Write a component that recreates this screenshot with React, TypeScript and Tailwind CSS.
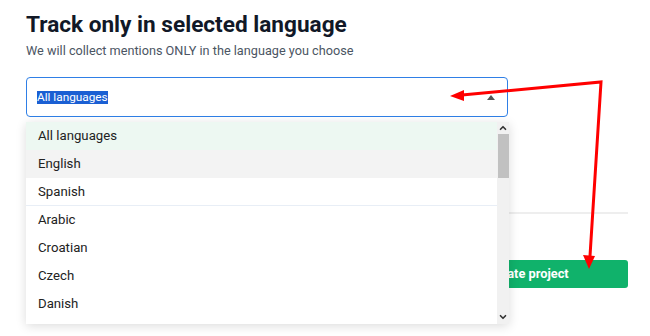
import { ChevronDown, ChevronUp } from 'lucide-react';

const languages = ['All languages', 'English', 'Spanish', 'Arabic', 'Croatian', 'Czech', 'Danish'];

export default function App() {
  return (
    <div className="relative h-[336px] w-[650px] overflow-hidden bg-white font-['Roboto',sans-serif]">
      <div className="pl-[26px] pr-[22px] pt-[11px]">
        <h1 className="text-[22.6px] font-bold leading-[28px] text-[#111827]">
          Track only in selected language
        </h1>
        <p className="mt-[3px] text-[12.7px] leading-[18px] text-[#4b5563]">
          We will collect mentions ONLY in the language you choose
        </p>

        <div className="relative mt-[17px] w-[482px]">
          <div className="flex h-[40px] items-center rounded-[4px] border border-[#2f7fe6] pl-[10px] pr-[12px]">
            <span className="bg-[#1a5fd3] text-[11.8px] leading-[13px] text-white">All languages</span>
            <span className="ml-auto h-0 w-0 border-x-[4px] border-b-[5px] border-x-transparent border-b-[#555]" />
          </div>

          {/* open dropdown list */}
          <div className="absolute left-0 top-[45px] z-10 flex h-[202px] w-[483px] overflow-hidden bg-white shadow-[0_2px_10px_rgba(0,0,0,0.14)]">
            <ul className="flex-1">
              {languages.map((lang, i) => (
                <li
                  key={lang}
                  className={`flex h-[28px] items-center px-[12px] text-[13.2px] text-[#222] ${
                    i === 0 ? 'bg-[#edf8f2]' : i === 1 ? 'bg-[#f3f3f3]' : ''
                  } ${i === 2 ? 'border-b border-[#e8eef6]' : ''}`}
                >
                  {lang}
                </li>
              ))}
            </ul>
            <div className="flex w-[12px] flex-col items-center bg-[#f1f1f1]">
              <ChevronUp className="mt-[1px] h-[10px] w-[10px] text-[#333]" strokeWidth={4} />
              <div className="mt-[1px] h-[44px] w-[11px] bg-[#c1c1c1]" />
              <ChevronDown className="mb-[2px] mt-auto h-[10px] w-[10px] text-[#333]" strokeWidth={4} />
            </div>
          </div>
        </div>

        <div className="mt-[95px] border-t-2 border-[#eeeeee]" />

        <div className="mt-[46px] flex justify-end">
          <button className="h-[28px] w-[200px] rounded-[3px] bg-[#10b26b] text-[12.8px] font-bold text-white">
            Create project
          </button>
        </div>
      </div>

      {/* annotation arrows */}
      <svg className="pointer-events-none absolute inset-0 z-20" width="650" height="336">
        <polyline points="462,95 601,82 590,256" fill="none" stroke="#ff0000" strokeWidth="3" />
        <polygon points="450,96 464,90 464,101" fill="#ff0000" />
        <polygon points="589,269 583,255 595,256" fill="#ff0000" />
      </svg>
    </div>
  );
}
